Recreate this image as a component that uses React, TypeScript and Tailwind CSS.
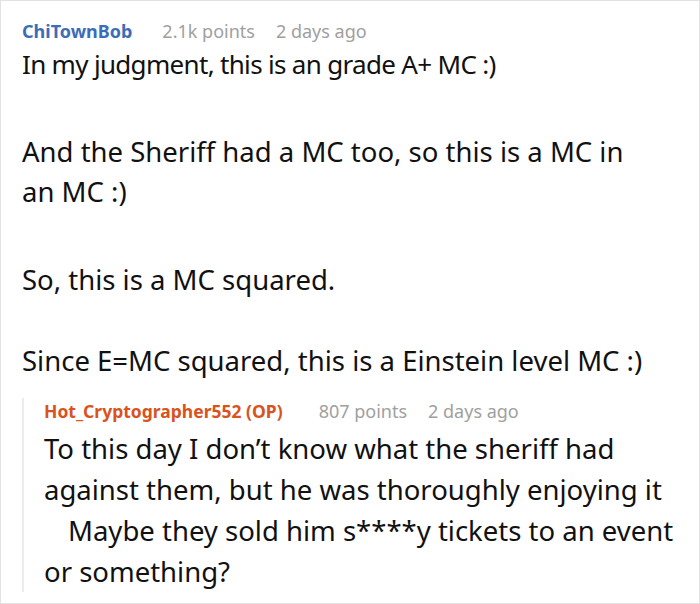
export default function App() {
  return (
    <div className="w-[700px] h-[604px] overflow-hidden bg-white border border-[#e2e2e2] font-['Noto_Sans',sans-serif] text-[#111]">
      <div className="pl-[21px] pr-[10px] pt-[17px]">
        <div className="flex items-baseline text-[18px] leading-[26px]">
          <span className="font-bold text-[#3d6db5]">ChiTownBob</span>
          <span className="ml-[30px] text-[#a0a0a0]">2.1k points</span>
          <span className="ml-[21px] text-[#a0a0a0]">2 days ago</span>
        </div>
        <div className="text-[27.5px] leading-[40px]">
          <p className="text-[26px] tracking-[-0.68px]">In my judgment, this is an grade A+ MC :)</p>
          <p className="mt-[48px]">
            And the Sheriff had a MC too, so this is a MC in
            <br />
            an MC :)
          </p>
          <p className="mt-[48px]">So, this is a MC squared.</p>
          <p className="mt-[41px]">Since E=MC squared, this is a Einstein level MC :)</p>
        </div>
        <div className="mt-[17px] border-l-2 border-[#ececec] pl-[20px]">
          <div className="flex items-baseline text-[17.5px] leading-[26px]">
            <span className="font-bold text-[#d9531e]">Hot_Cryptographer552 (OP)</span>
            <span className="ml-[36px] text-[#a0a0a0] text-[18px]">807 points</span>
            <span className="ml-[21px] text-[#a0a0a0] text-[18px]">2 days ago</span>
          </div>
          <div className="text-[27.5px] leading-[41px] mt-[4px] mb-[-8px]">
            <p>
              To this day I don’t know what the sheriff had
              <br />
              against them, but he was thoroughly enjoying it
              <br />
              <span className="inline-block w-[24px]"></span>Maybe they sold him s****y tickets to an event
              <br />
              or something?
            </p>
          </div>
        </div>
      </div>
    </div>
  );
}
